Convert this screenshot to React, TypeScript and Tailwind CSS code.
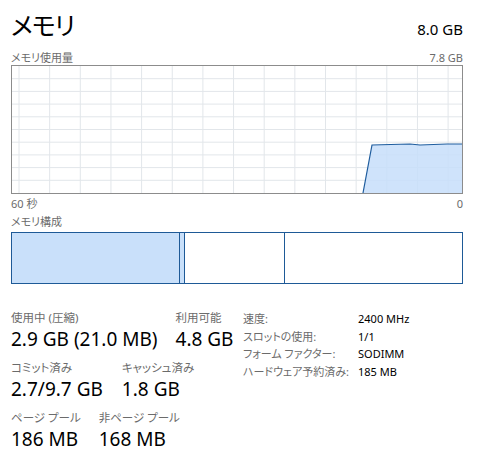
import React from 'react';

const font = "font-['Noto_Sans','Noto_Sans_CJK_JP',sans-serif] [font-feature-settings:'palt']";

const vLines = Array.from({ length: 15 }, (_, i) => 7 + i * 30.65);
const hLines = Array.from({ length: 9 }, (_, i) => 12.7 * (i + 1));

const UsageGraph = () => (
  <div className="w-[452px] h-[129px] border border-[#8c8c8c] bg-white">
    <svg width="450" height="127" className="block">
      {vLines.map((x) => (
        <line key={x} x1={x} y1={0} x2={x} y2={127} stroke="#e2e6ea" strokeWidth="1" />
      ))}
      {hLines.map((y) => (
        <line key={y} x1={0} y1={y} x2={450} y2={y} stroke="#e2e6ea" strokeWidth="1" />
      ))}
      <polygon
        points="351,127 360,79 398,78 408,79 435,78 450,78 450,127"
        fill="#c7defa"
        fillOpacity="0.85"
      />
      <polyline
        points="351,127 360,79 398,78 408,79 435,78 450,78"
        fill="none"
        stroke="#1f5d9e"
        strokeWidth="1.2"
      />
    </svg>
  </div>
);

const Stat = ({ label, value }: { label: string; value: string }) => (
  <div className="flex flex-col">
    <span className="text-[11.5px] leading-[16px] text-[#6b6b6b]">{label}</span>
    <span className="text-[19px] leading-[26px] text-black">{value}</span>
  </div>
);

export default function App() {
  const specs = [
    ['速度:', '2400 MHz'],
    ['スロットの使用:', '1/1'],
    ['フォーム ファクター:', 'SODIMM'],
    ['ハードウェア予約済み:', '185 MB'],
  ];

  return (
    <div className={`${font} w-[487px] h-[471px] bg-white pl-[11px] pt-[8px]`}>
      <div className="w-[452px]">
        {/* header */}
        <div className="flex justify-between items-baseline h-[36px]">
          <h1 className="text-[25px] leading-[34px] text-black tracking-[-1px]">メモリ</h1>
          <span className="text-[15px] text-black">8.0 GB</span>
        </div>

        <div className="flex justify-between mt-[6px] h-[15px] text-[11px] leading-[15px] text-[#6b6b6b]">
          <span>メモリ使用量</span>
          <span>7.8 GB</span>
        </div>

        <UsageGraph />

        <div className="flex justify-between h-[17px] mt-[1px] text-[11px] leading-[17px] text-[#6b6b6b]">
          <span>60 秒</span>
          <span>0</span>
        </div>

        <div className="mt-[2px] h-[15px] text-[11px] leading-[15px] text-[#6b6b6b]">メモリ構成</div>

        {/* composition bar */}
        <div className="flex mt-[3px] w-[452px] h-[52px] border border-[#1e5a97]">
          <div className="w-[168px] bg-[#c9e0fa] border-r border-[#1e5a97]" />
          <div className="w-[5px] bg-[#c9e0fa] border-r border-[#1e5a97]" />
          <div className="w-[100px] bg-white border-r border-[#1e5a97]" />
          <div className="flex-1 bg-white" />
        </div>

        {/* stats */}
        <div className="flex items-start mt-[26px]">
          <div className="flex flex-col gap-[8px] w-[232px]">
            <div className="flex gap-[18px]">
              <Stat label="使用中 (圧縮)" value="2.9 GB (21.0 MB)" />
              <Stat label="利用可能" value="4.8 GB" />
            </div>
            <div className="flex gap-[19px]">
              <Stat label="コミット済み" value="2.7/9.7 GB" />
              <Stat label="キャッシュ済み" value="1.8 GB" />
            </div>
            <div className="flex gap-[18px]">
              <Stat label="ページ プール" value="186 MB" />
              <Stat label="非ページ プール" value="168 MB" />
            </div>
          </div>
          <div className="grid grid-cols-[115px_1fr] content-start text-[11px] leading-[17.5px]">
            {specs.map(([k, v]) => (
              <React.Fragment key={k}>
                <span className="text-[#6b6b6b]">{k}</span>
                <span className="text-black">{v}</span>
              </React.Fragment>
            ))}
          </div>
        </div>
      </div>
    </div>
  );
}
